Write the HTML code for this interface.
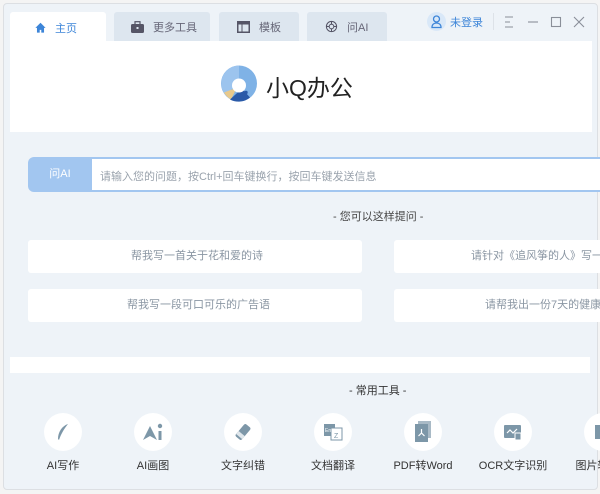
<!DOCTYPE html>
<html><head><meta charset="utf-8"><style>
*{margin:0;padding:0;box-sizing:border-box}
body{width:600px;height:494px;background:#f4f4f4;font-family:"Liberation Sans","Noto Sans CJK SC",sans-serif;position:relative;overflow:hidden}
.win{position:absolute;left:0;top:0;width:600px;height:494px;overflow:hidden}
.frame{position:absolute;left:3px;top:3px;width:595px;height:487px;background:#eef3f8;border:1px solid #dcdfe3;border-radius:4px}
.abs{position:absolute}
.tab{position:absolute;top:12px;height:29px;background:#dde6ef;border-radius:3px 3px 0 0;font-size:11px;color:#667;display:flex;align-items:center;padding-left:16px;gap:9px}
.card{position:absolute;background:#fff;border-radius:3px;height:33px;font-size:11px;color:#8a96a3;line-height:33px;white-space:nowrap}
.tool{position:absolute;top:413px;width:90px;text-align:center}
.tool .c{width:38px;height:38px;border-radius:50%;background:#fff;margin:0 auto;display:flex;align-items:center;justify-content:center}
.tool .t{font-size:11px;color:#333;margin-top:6px}
</style></head><body>
<div class="frame"></div>
<div class="win">
 <div class="tab" style="left:10px;width:96px;height:31px;background:#fff;color:#3d85d8;padding-left:25px">
  <svg width="11" height="11" viewBox="0 0 14 14"><path d="M7 1L0.5 7.5h2v6h3.5V10h2v3.5h3.5v-6h2z" fill="#3d85d8"/></svg>主页</div>
 <div class="tab" style="left:114px;width:96px;padding-left:17px"><svg width="13" height="12" viewBox="0 0 13 12"><rect x="0" y="3" width="13" height="9" rx="1.5" fill="#556"/><rect x="4" y="0.7" width="5" height="3" fill="none" stroke="#556" stroke-width="1.2"/><rect x="5.5" y="6" width="2" height="2" fill="#dde6ef"/></svg>更多工具</div>
 <div class="tab" style="left:219px;width:80px;padding-left:18px"><svg width="13" height="12" viewBox="0 0 13 12"><rect x="0" y="0" width="13" height="12" fill="#556"/><rect x="1.5" y="3.5" width="3" height="7" fill="#dde6ef"/><rect x="5.5" y="3.5" width="6" height="7" fill="#dde6ef"/></svg>模板</div>
 <div class="tab" style="left:307px;width:80px;padding-left:18px"><svg width="13" height="13" viewBox="0 0 14 14" fill="none" stroke="#556" stroke-width="1.1"><circle cx="7" cy="7" r="5.5"/><circle cx="7" cy="7" r="2.5"/><path d="M7 1.5v3M7 9.5v3M1.5 7h3M9.5 7h3"/></svg>问AI</div>
 <div class="abs" style="left:427px;top:12px;width:19px;height:19px;border-radius:50%;background:#d9e8f8"><svg width="19" height="19" viewBox="0 0 19 19" fill="none" stroke="#3d85d8" stroke-width="1.3"><circle cx="9.5" cy="7" r="3"/><path d="M5 15.5c0-3 2-4.5 4.5-4.5s4.5 1.5 4.5 4.5z"/></svg></div>
 <div class="abs" style="left:450px;top:14px;font-size:11px;color:#3d85d8">未登录</div>
 <div class="abs" style="left:493px;top:13px;width:1px;height:17px;background:#dde2e8"></div>
 <svg class="abs" style="left:500px;top:14px" width="92" height="16" viewBox="0 0 92 16" fill="none" stroke="#8a8f99" stroke-width="1.1"><path d="M5 3h8M5 8h5M5 13h8"/><path d="M28 8h10"/><rect x="51.5" y="3.5" width="9" height="9"/><path d="M74 3l10 10M84 3l-10 10"/></svg>
 <div class="abs" style="left:10px;top:41px;width:582px;height:91px;background:#fff"></div>
 <svg class="abs" style="left:220px;top:64px" width="38" height="39" viewBox="0 0 38 38"><circle cx="19" cy="19" r="18" fill="#7fb2e6"/><path d="M19 1A18 18 0 0 0 5 30L19 19z" fill="#9cc4ee"/><path d="M4 28A18 18 0 0 0 11 35L17 23z" fill="#e8c98c"/><path d="M10 35A18 18 0 0 0 30 33L22 24z" fill="#2a5aa8"/><circle cx="19" cy="21" r="7" fill="#fff"/><circle cx="26" cy="28" r="1.7" fill="#2a5aa8"/></svg>
 <div class="abs" style="left:266px;top:69px;font-size:23px;color:#222">小Q办公</div>
 <div class="abs" style="left:28px;top:157px;width:572px;height:35px;background:#a2c6f0;border-radius:6px 0 0 6px"></div>
 <div class="abs" style="left:92px;top:159px;width:508px;height:31px;background:#fff"></div>
 <div class="abs" style="left:28px;top:157px;width:64px;height:35px;line-height:35px;text-align:center;color:#fff;font-size:11px">问AI</div>
 <div class="abs" style="left:100px;top:168px;font-size:11px;color:#9aa3ad">请输入您的问题，按Ctrl+回车键换行，按回车键发送信息</div>
 <div class="abs" style="left:333px;top:208px;font-size:11px;color:#444">- 您可以这样提问 -</div>
 <div class="card" style="left:28px;top:240px;width:334px;padding-left:103px">帮我写一首关于花和爱的诗</div>
 <div class="card" style="left:28px;top:289px;width:334px;padding-left:99px">帮我写一段可口可乐的广告语</div>
 <div class="card" style="left:394px;top:240px;width:210px;padding-left:77px">请针对《追风筝的人》写一篇读后感</div>
 <div class="card" style="left:394px;top:289px;width:210px;padding-left:91px">请帮我出一份7天的健康食谱</div>
 <div class="abs" style="left:10px;top:357px;width:580px;height:16px;background:#fff"></div>
 <div class="abs" style="left:349px;top:382px;font-size:11px;color:#333">- 常用工具 -</div>
 <div class="tool" style="left:18px"><div class="c"><svg width="20" height="20" viewBox="0 0 20 20"><path d="M15 2C9 4 5 10 5 17l1 1C8 12 11 7 15 2z" fill="#7d97a8"/></svg></div><div class="t">AI写作</div></div>
 <div class="tool" style="left:108px"><div class="c"><svg width="22" height="20" viewBox="0 0 22 20"><path d="M1 18L8 4l7 14-7-4z" fill="#7d97a8"/><circle cx="18" cy="4" r="2.2" fill="#7d97a8"/><rect x="16.5" y="9" width="3" height="9" fill="#7d97a8"/></svg></div><div class="t">AI画图</div></div>
 <div class="tool" style="left:198px"><div class="c"><svg width="20" height="20" viewBox="0 0 20 20"><rect x="6" y="2" width="8" height="16" rx="2" transform="rotate(40 10 10)" fill="#7d97a8"/><rect x="6" y="12" width="8" height="4" transform="rotate(40 10 10)" fill="#dfe6eb"/></svg></div><div class="t">文字纠错</div></div>
 <div class="tool" style="left:288px"><div class="c"><svg width="22" height="20" viewBox="0 0 22 20"><rect x="2" y="2" width="11" height="12" fill="#7d97a8"/><rect x="9" y="6" width="11" height="12" fill="#fff" stroke="#7d97a8"/><text x="3" y="10" font-size="5" fill="#fff" font-family="Liberation Sans">En</text><text x="12" y="16" font-size="7" fill="#7d97a8" font-family="Liberation Sans">Z</text></svg></div><div class="t">文档翻译</div></div>
 <div class="tool" style="left:378px"><div class="c"><svg width="18" height="22" viewBox="0 0 18 22"><rect x="4" y="0" width="13" height="17" fill="#a9bac6"/><rect x="1" y="3" width="13" height="18" fill="#7d97a8"/><path d="M7.5 8v4M7.5 12l-3 3M7.5 12l3 3" stroke="#fff" stroke-width="1.2" fill="none"/></svg></div><div class="t">PDF转Word</div></div>
 <div class="tool" style="left:468px"><div class="c"><svg width="22" height="20" viewBox="0 0 22 20"><rect x="2" y="3" width="17" height="13" rx="1" fill="#7d97a8"/><path d="M5 11l3-3 3 3 4-4" stroke="#fff" stroke-width="1.2" fill="none"/><rect x="13" y="11" width="6" height="7" fill="#7d97a8" stroke="#fff"/></svg></div><div class="t">OCR文字识别</div></div>
 <div class="tool" style="left:558px"><div class="c"><svg width="20" height="20" viewBox="0 0 20 20"><rect x="2" y="3" width="16" height="14" fill="#7d97a8"/></svg></div><div class="t">图片转文字</div></div>
</div>
</body></html>
